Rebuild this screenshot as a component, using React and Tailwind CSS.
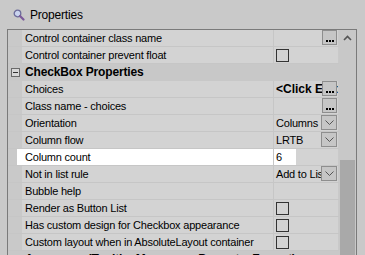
import React from 'react';

const rows = [
  { label: 'Control container class name', value: '', button: 'dots' },
  { label: 'Control container prevent float', check: true },
  { header: 'CheckBox Properties' },
  { label: 'Choices', value: '<Click Edit>', bold: true, button: 'dots' },
  { label: 'Class name - choices', value: '', button: 'dots' },
  { label: 'Orientation', value: 'Columns', button: 'drop' },
  { label: 'Column flow', value: 'LRTB', button: 'drop' },
  { label: 'Column count', value: '6', selected: true },
  { label: 'Not in list rule', value: 'Add to List', button: 'drop' },
  { label: 'Bubble help', value: '' },
  { label: 'Render as Button List', check: true },
  { label: 'Has custom design for Checkbox appearance', check: true },
  { label: 'Custom layout when in AbsoluteLayout container', check: true },
  { header: 'Accessory (Tooltip, Messages, Prompts, Format)', partial: true },
];

function Dots() {
  return (
    <div className="absolute right-[1px] top-0 w-[15px] h-[15px] bg-[#c6c6c6] border border-[#8e8e8e] flex items-end justify-center pb-[2px] gap-[1px]">
      <span className="w-[2px] h-[2px] bg-black" />
      <span className="w-[2px] h-[2px] bg-black" />
      <span className="w-[2px] h-[2px] bg-black" />
    </div>
  );
}

function Drop() {
  return (
    <div className="absolute right-[1px] top-0 w-[16px] h-[15px] bg-[#c6c6c6] border border-[#8e8e8e] flex items-center justify-center">
      <svg width="9" height="5" viewBox="0 0 9 5">
        <path d="M0.5 0.5 L4.5 4.5 L8.5 0.5" fill="none" stroke="#555" strokeWidth="1" />
      </svg>
    </div>
  );
}

function Row({ row }) {
  if (row.header) {
    return (
      <div className="flex h-[17px] items-center bg-[#c8c8c8] border-b border-[#c8c8c8]">
        <div className="w-[14px] h-full flex items-center justify-center">
          {!row.partial && (
            <div className="w-[9px] h-[9px] border border-[#6a6a6a] bg-[#d8d8d8] flex items-center justify-center">
              <span className="w-[5px] h-[1px] bg-[#333]" />
            </div>
          )}
        </div>
        <span className="pl-[3px] text-[12px] font-bold text-black tracking-[-0.15px] whitespace-nowrap">
          {row.header}
        </span>
      </div>
    );
  }
  const cell = row.selected ? 'bg-white' : 'bg-[#d3d3d3]';
  return (
    <div className="flex h-[17px] border-b border-[#c6c6c6]">
      <div className="w-[14px] h-full flex">
        <div className="w-[9px]" />
        <div className={`w-[5px] ${row.selected ? 'bg-white' : ''}`} />
      </div>
      <div className={`w-[252px] h-full ${cell} border-r border-[#c6c6c6] pl-[3px] flex items-center overflow-hidden whitespace-nowrap text-[11px] tracking-[-0.2px] text-black`}>
        {row.label}
      </div>
      <div className="relative w-[64px] h-full bg-[#d3d3d3] flex items-center overflow-hidden whitespace-nowrap">
        {row.selected && <div className="absolute left-0 top-0 w-[22px] h-full bg-white" />}
        {row.check && <div className="ml-[2px] w-[13px] h-[13px] border border-[#333]" />}
        {row.value && (
          <span className={`relative pl-[2px] text-black ${row.bold ? 'text-[12px] font-bold' : 'text-[11px] tracking-[-0.2px]'}`}>
            {row.value}
          </span>
        )}
        {row.button === 'dots' && <Dots />}
        {row.button === 'drop' && <Drop />}
      </div>
    </div>
  );
}

export default function App() {
  return (
    <div className="w-[365px] h-[255px] bg-[#c9c9c9] overflow-hidden" style={{ fontFamily: '"Liberation Sans", Arial, sans-serif' }}>
      <div className="h-[29px] flex items-center pl-[13px] gap-[5px]">
        <svg width="12" height="12" viewBox="0 0 12 12">
          <circle cx="4.5" cy="4.5" r="3.3" fill="#c9d3ee" stroke="#6b6b9a" strokeWidth="1.3" />
          <path d="M7 7 L10.5 10.5" stroke="#7b5a9a" strokeWidth="2.2" strokeLinecap="round" />
        </svg>
        <span className="text-[12px] text-black tracking-[-0.2px]">Properties</span>
      </div>
      <div className="ml-[7px] w-[350px] h-[226px] border-l border-t border-r border-[#7a7a7a] flex overflow-hidden">
        <div className="w-[331px] flex flex-col">
          {rows.map((r, i) => (
            <Row key={i} row={r} />
          ))}
        </div>
        <div className="w-[17px] flex flex-col items-center bg-[#c8c8c8]">
          <svg className="mt-[5px]" width="9" height="6" viewBox="0 0 9 6">
            <path d="M1 5 L4.5 1.5 L8 5" fill="none" stroke="#555" strokeWidth="1.6" />
          </svg>
          <div className="mt-[119px] w-[15px] flex-1 bg-[#a9a9a9]" />
        </div>
      </div>
    </div>
  );
}
